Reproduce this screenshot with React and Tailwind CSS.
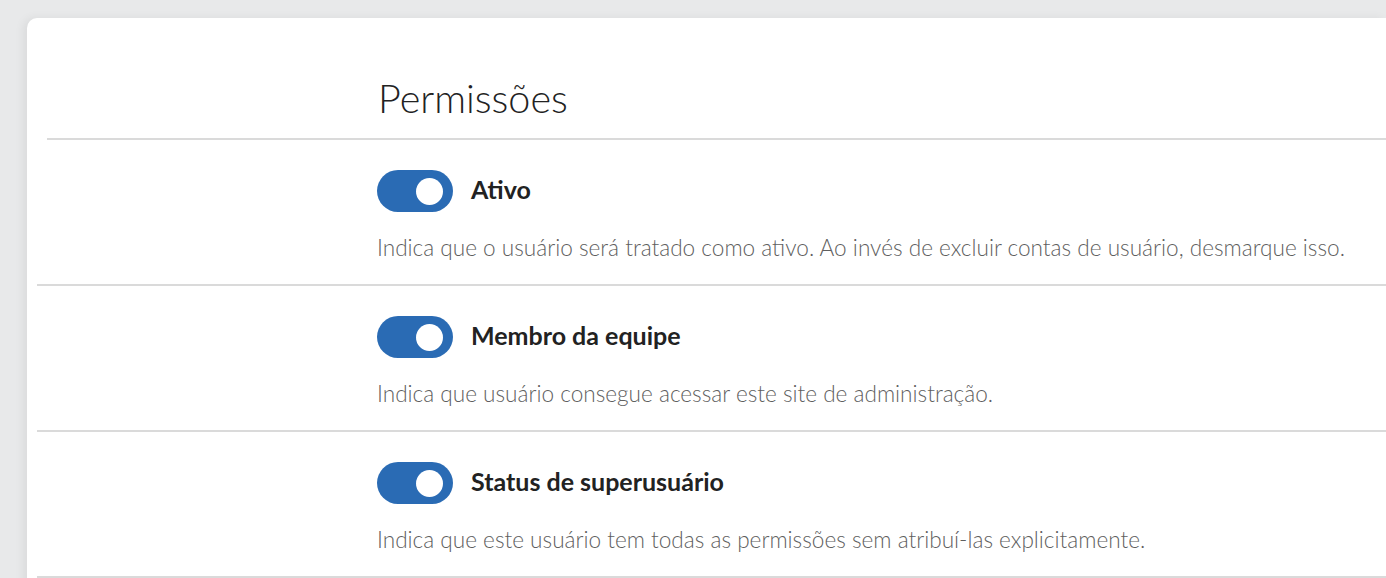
import React from 'react';

const rows = [
  {
    label: 'Ativo',
    help: 'Indica que o usuário será tratado como ativo. Ao invés de excluir contas de usuário, desmarque isso.',
  },
  {
    label: 'Membro da equipe',
    help: 'Indica que usuário consegue acessar este site de administração.',
  },
  {
    label: 'Status de superusuário',
    help: 'Indica que este usuário tem todas as permissões sem atribuí-las explicitamente.',
  },
];

function Toggle() {
  return (
    <div className="flex h-[42px] w-[76px] shrink-0 items-center justify-end rounded-full bg-[#2a6bb4] pr-[10px]">
      <div className="h-[27px] w-[27px] rounded-full bg-white" />
    </div>
  );
}

export default function App() {
  return (
    <div className="h-[578px] overflow-hidden bg-[#e8e9ea] pl-[27px] pt-[18px]" style={{ fontFamily: 'Lato, "Open Sans", sans-serif' }}>
      <div className="h-[600px] rounded-tl-[10px] bg-white shadow-[-4px_0_10px_rgba(0,0,0,0.06)]">
        {/* header */}
        <div className="ml-[20px] border-b-2 border-[#dadada] pb-[20px] pt-[60px] pl-[331px]">
          <h1 className="text-[39.5px] font-light leading-[40px] text-[#222]">Permissões</h1>
        </div>
        {/* rows */}
        {rows.map(r => (
          <div key={r.label} className="ml-[10px] border-b-2 border-[#dadada] pb-[22px] pl-[340px] pt-[30px]">
            <div className="flex items-center gap-[18px]">
              <Toggle />
              <span className="-mt-[5px] whitespace-nowrap text-[25px] font-bold leading-[30px] text-[#222]">{r.label}</span>
            </div>
            <p className="mt-[22px] whitespace-nowrap text-[22.6px] font-light leading-[28px] text-[#5f5f5f]">{r.help}</p>
          </div>
        ))}
      </div>
    </div>
  );
}
